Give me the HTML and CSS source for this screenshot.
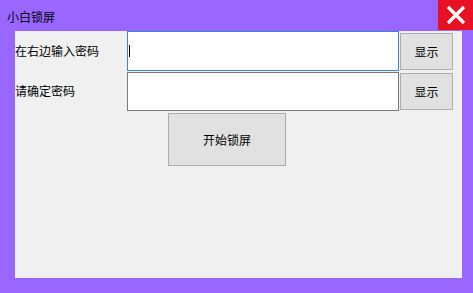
FILE: index.html
```html
<!DOCTYPE html>
<html lang="zh-CN">
<head>
<meta charset="utf-8">
<title>小白锁屏</title>
<link rel="stylesheet" href="styles.css">
</head>
<body>
<div class="window">
  <div class="titlebar">
    <span class="title">小白锁屏</span>
    <div class="close">
      <svg width="20" height="20" viewBox="0 0 20 20"><path d="M2 2 L18 18 M18 2 L2 18" stroke="#fff" stroke-width="3.2" fill="none"/></svg>
    </div>
  </div>
  <div class="panel">
    <div class="form">
      <div class="label">在右边输入密码</div>
      <div class="field focused"><span class="caret"></span></div>
      <div class="btn show">显示</div>
      <div class="label">请确定密码</div>
      <div class="field"></div>
      <div class="btn show">显示</div>
    </div>
    <div class="actions">
      <div class="btn start">开始锁屏</div>
    </div>
  </div>
</div>
</body>
</html>
```

FILE: styles.css
```css
html, body {
  margin: 0;
  padding: 0;
}
body {
  width: 473px;
  height: 293px;
  background: #9966ff;
  font-family: "Noto Sans CJK SC", "Noto Sans", sans-serif;
  font-size: 12px;
  color: #000;
  overflow: hidden;
}
.window {
  display: flex;
  flex-direction: column;
}
.titlebar {
  height: 31px;
  display: flex;
  align-items: flex-start;
  justify-content: space-between;
}
.title {
  padding-left: 7px;
  padding-top: 9px;
  line-height: 16px;
}
.close {
  width: 35px;
  height: 30px;
  background: #e81123;
  display: flex;
  align-items: center;
  justify-content: center;
}
.panel {
  margin-left: 15px;
  width: 447px;
  height: 247px;
  background: #f0f0f0;
}
.form {
  display: grid;
  grid-template-columns: 111px 272px 53px;
  grid-template-rows: 40px 39px;
  column-gap: 1px;
  row-gap: 1px;
  align-items: center;
}
.label {
  line-height: 16px;
  margin-top: -1px;
}
.field {
  box-sizing: border-box;
  height: 100%;
  background: #fff;
  border: 1px solid #7a7a7a;
  display: flex;
  align-items: center;
}
.field.focused {
  border-color: #3d85c6;
}
.caret {
  width: 1px;
  height: 12px;
  margin-left: 1px;
  margin-top: -1px;
  background: #000;
}
.btn {
  box-sizing: border-box;
  background: #e1e1e1;
  border: 1px solid #adadad;
  display: flex;
  align-items: center;
  justify-content: center;
}
.show {
  height: 37px;
}
.actions {
  padding-left: 153px;
  padding-top: 2px;
}
.start {
  width: 118px;
  height: 53px;
}
```
